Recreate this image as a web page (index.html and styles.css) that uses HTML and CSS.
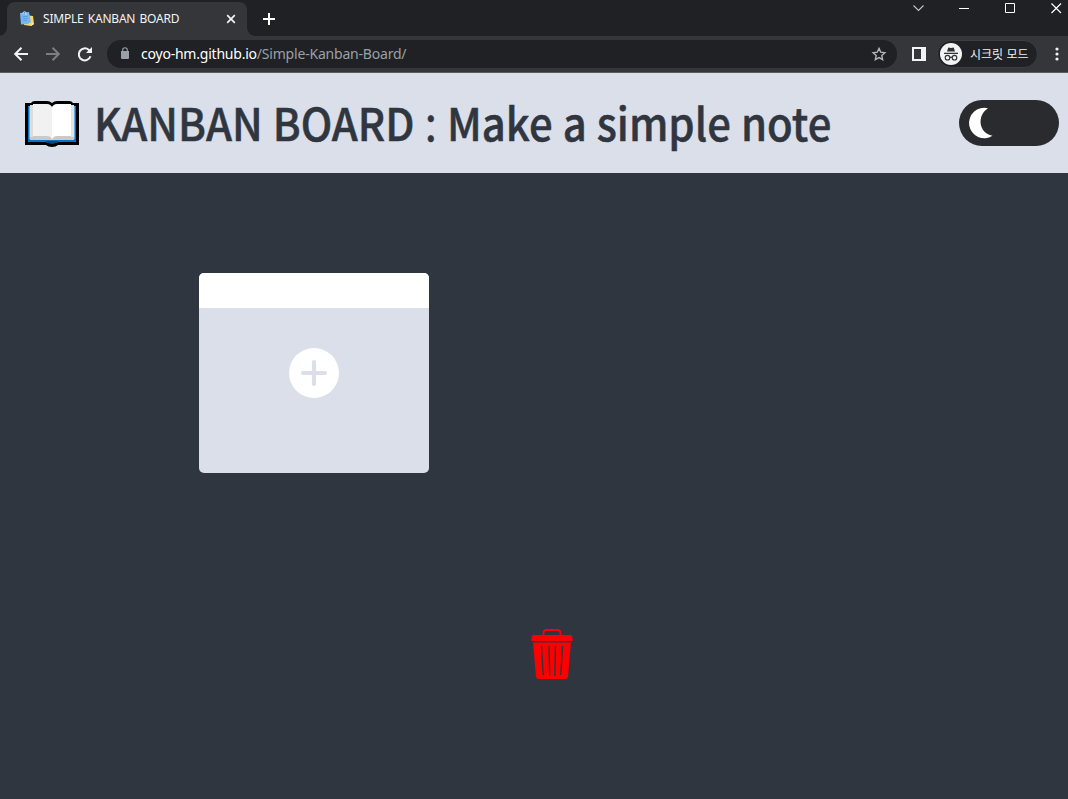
FILE: index.html
```html
<!DOCTYPE html>
<html lang="ko">
<head>
<meta charset="utf-8">
<title>SIMPLE KANBAN BOARD</title>
<link rel="stylesheet" href="styles.css">
</head>
<body>
<div class="tabs">
  <div class="tab">
    <svg class="favicon" viewBox="0 0 16 16"><path d="M5 4l9 1 1 8-3 2-7-1z" fill="#f9d66b"/><path d="M12 15l1-3 2 1z" fill="#fff0b5"/><path d="M1 2l9-1 2 10-3 2-7 .5z" fill="#75b7f4"/><path d="M3.500 5.500h5M3.700 7.500h5M4 9.500h4" stroke="#4f95da" stroke-width=".7" fill="none"/><path d="M4 3V1.500Q5.500-.3 7 1.500V4" stroke="#bce3ff" fill="none"/></svg>
    <span class="tab-title">SIMPLE KANBAN BOARD</span>
    <svg class="tab-close" viewBox="0 0 10 10"><path d="M1.2 1.2l7.6 7.6M8.8 1.2L1.2 8.8" stroke="#f1f3f4" stroke-width="1.7"/></svg>
  </div>
  <svg class="new-tab" viewBox="0 0 12 12"><path d="M6 0v12M0 6h12" stroke="#fff" stroke-width="2"/></svg>
  <svg class="window-buttons" viewBox="0 0 150 16" fill="none" stroke="#fff"><path d="M.5 5.500l5 5 5-5" stroke="#c4c5c7" stroke-width="1.1"/><path d="M46 8.500h10M92.500 3.500h9v9h-9z"/><path d="M138.500 3.500l9.500 9.500M148 3.500l-9.500 9.500" stroke-width="1.2"/></svg>
</div>
<div class="toolbar">
  <svg class="nav" viewBox="0 0 84 20" fill="none" stroke-width="2"><path d="M14 10H1.500M7.500 3.700L1.200 10l6.300 6.300" stroke="#f1f3f4"/><path d="M32 10h12.500M38.500 3.700l6.300 6.300-6.300 6.300" stroke="#7d7e81"/><path d="M76.500 12.300a6 6 0 1 1-1.800-6.500l1.800 2" stroke="#f1f3f4"/><path d="M78 3v6h-6z" fill="#f1f3f4"/></svg>
  <div class="address">
    <svg class="lock" viewBox="0 0 8 12"><path d="M0 4h8v7q0 1-1 1H1q-1 0-1-1z" fill="#9aa0a6"/><path d="M1.700 5V3a2.300 2.300 0 0 1 4.600 0v2" fill="none" stroke="#9aa0a6" stroke-width="1.100"/></svg>
    <span class="url"><span class="host">coyo-hm.github.io</span><span class="path">/Simple-Kanban-Board/</span></span>
    <svg class="star" viewBox="0 0 14 14"><path d="M7 1.400l1.750 3.800 4.150.5-3.100 2.850.85 4.100L7 10.600l-3.650 2.050.85-4.100L1.100 5.700l4.150-.5z" fill="none" stroke="#b4b5b8" stroke-width="1.400"/></svg>
  </div>
  <svg class="panel" viewBox="0 0 14 14"><path fill="#f1f3f4" fill-rule="evenodd" d="M0 0h14v14H0zM2 2v10h7V2z"/></svg>
  <div class="incognito">
    <svg class="spy" viewBox="0 0 22 22"><circle cx="11" cy="11" r="11" fill="#f1f3f4"/><path d="M7 8.500l1.300-4L11 5l2.700-.5L15 8.500zM4 9.800h14v1.200H4z" fill="#303134"/><g fill="none" stroke="#303134" stroke-width="1.100"><circle cx="7.500" cy="14.700" r="2.300"/><circle cx="14.500" cy="14.700" r="2.300"/><path d="M9.800 14.500q1.200-.7 2.400 0"/></g></svg>
    <span class="mode">시크릿 모드</span>
  </div>
  <svg class="more" viewBox="0 0 4 14" fill="#f1f3f4"><circle cx="2" cy="2" r="1.600"/><circle cx="2" cy="7" r="1.600"/><circle cx="2" cy="12" r="1.600"/></svg>
</div>
<header class="header">
  <svg class="book" viewBox="0 0 54 46"><path d="M0 2h6q1-2 4-2h12q3 0 5 2 2-2 5-2h12q3 0 4 2h6v42H33q-2 2-6 2t-6-2H0z"/><path d="M3 5h48v36H3z" fill="#0872c4"/><path d="M4 5h46v33H4z" fill="#55acee"/><path d="M5 5h44v34H29l-2 1-2-1H5z" fill="#c9c9c9"/><path d="M5 4h3v32H5z" fill="#ddd"/><path d="M8 3h14q4 0 5 4v32q-1-4-5-4H8z" fill="#f1f1f1"/><path d="M27 7q1-4 5-4h14v32H32q-4 0-5 4z" fill="#fff"/><path d="M46 4h3v32h-3z" fill="#e3e3e3"/><path d="M24 2q2 1 3 4 1-3 3-4z"/><path d="M21 40h4l2-1 2 1h4v2h-3q-1 1-3 1t-3-1h-3z" fill="#00477f"/></svg>
  <h1 class="heading">KANBAN BOARD <span class="colon">:</span> Make a simple note</h1>
  <div class="toggle"><svg class="moon" viewBox="0 0 24 31"><path d="M19 .3A15.200 15.200 0 1 0 23.500 27.800C9 25 8 7 19 .3z" fill="#fff"/></svg></div>
</header>
<main class="board">
  <div class="card">
    <div class="card-head"></div>
    <div class="card-body"><svg class="add" viewBox="0 0 50 50"><circle cx="25" cy="25" r="25" fill="#fff"/><path d="M25 14v22M14 25h22" stroke="#dbdfea" stroke-width="4.200" stroke-linecap="round"/></svg></div>
  </div>
  <svg class="trash" viewBox="0 0 42 51"><path d="M12.500 7V4q0-3 3-3h11q3 0 3 3v3" fill="none" stroke="#f00" stroke-width="1.800"/><path d="M3 6h36q2.500 0 2.500 3v3H.5V9q0-3 2.500-3z" fill="#f00"/><path d="M2 13.500h38l-3 34q-.3 2.500-3 2.500H8q-2.700 0-3-2.500z" fill="#f00"/><path d="M10.500 17l1.700 29M18 17l.7 30M24.500 17l-.7 30M31.500 17l-1.700 29" stroke="#303640" stroke-width="1.400"/></svg>
</main>
</body>
</html>
```
FILE: styles.css
```css
* { box-sizing: border-box; }
body { margin: 0; height: 799px; overflow: hidden; background: #303640; font-family: "Noto Sans", "Noto Sans CJK KR", sans-serif; }
svg { display: block; flex: none; overflow: visible; }
span, h1 { white-space: nowrap; }
.tabs { height: 36px; background: #202124; display: flex; align-items: flex-start; padding-left: 7px; }
.tab { width: 240px; height: 34px; margin-top: 2px; background: #35363a; border-radius: 8px 8px 0 0; display: flex; align-items: center; padding: 0 11px 0 12px; position: relative; }
.tab::before, .tab::after { content: ""; position: absolute; bottom: 0; width: 8px; height: 8px; }
.tab::before { left: -8px; background: radial-gradient(circle at 0 0, #202124 7.5px, #35363a 8px); }
.tab::after { right: -8px; background: radial-gradient(circle at 100% 0, #202124 7.5px, #35363a 8px); }
.favicon { width: 16px; height: 16px; }
.tab-title { margin-left: 8px; flex: 1; color: #f1f3f4; font: 12px/16px "Noto Sans", sans-serif; letter-spacing: -0.2px; word-spacing: 1.2px; }
.tab-close { width: 10px; height: 10px; }
.new-tab { width: 12px; height: 12px; margin: 13px 0 0 16px; }
.window-buttons { width: 150px; height: 16px; margin-left: auto; margin-right: 5px; }
.toolbar { height: 37px; background: #35363a; border-bottom: 1px solid #5b5c60; display: flex; align-items: center; padding-left: 14px; }
.nav { width: 84px; height: 20px; }
.address { width: 790px; height: 28px; margin-left: 9px; border-radius: 14px; background: #202124; display: flex; align-items: center; padding: 0 11px 0 14px; }
.lock { width: 8px; height: 12px; margin-top: -2px; }
.url { flex: 1; margin-left: 12px; color: #9aa0a6; font-size: 14px; line-height: 20px; }
.host { color: #fff; letter-spacing: -0.22px; }
.path { letter-spacing: -0.2px; }
.star { width: 14px; height: 14px; }
.panel { width: 14px; height: 14px; margin-left: 15px; }
.incognito { width: 101px; height: 28px; margin-left: 11px; border-radius: 14px; background: #202124; border: 1px solid #3d3e42; display: flex; align-items: center; padding-left: 2px; }
.spy { width: 22px; height: 22px; }
.mode { margin-left: 8px; margin-top: -1px; color: #f1f3f4; font: 12px/16px "Noto Sans CJK KR", sans-serif; }
.more { width: 4px; height: 14px; margin-left: 17px; }
.header { height: 100px; background: #dbdfea; display: flex; align-items: center; padding: 0 9px 0 25px; }
.book { width: 54px; height: 46px; margin-top: 2px; }
.heading { margin: -2px 0 0 15px; color: #303640; font: 500 45px/60px "Noto Sans CJK KR", sans-serif; word-spacing: -1.8px; transform: scaleX(0.93); transform-origin: 0 50%; -webkit-text-stroke: 0.5px #303640; }
.colon { font-size: 40px; line-height: 0; vertical-align: -3.5px; margin: 0 0.7px; }
.toggle { width: 100px; height: 46px; margin-left: auto; border-radius: 23px; background: #292b2e; padding: 8px 10px; }
.moon { width: 24px; height: 31px; }
.board { height: 626px; padding: 100px 0 0 199px; }
.card { width: 230px; height: 200px; border-radius: 5px; overflow: hidden; background: #dbdfea; }
.card-head { height: 35px; background: #fff; }
.card-body { padding: 40px 90px; }
.add { width: 50px; height: 50px; }
.trash { width: 42px; height: 51px; margin: 156px 0 0 332px; }
```
